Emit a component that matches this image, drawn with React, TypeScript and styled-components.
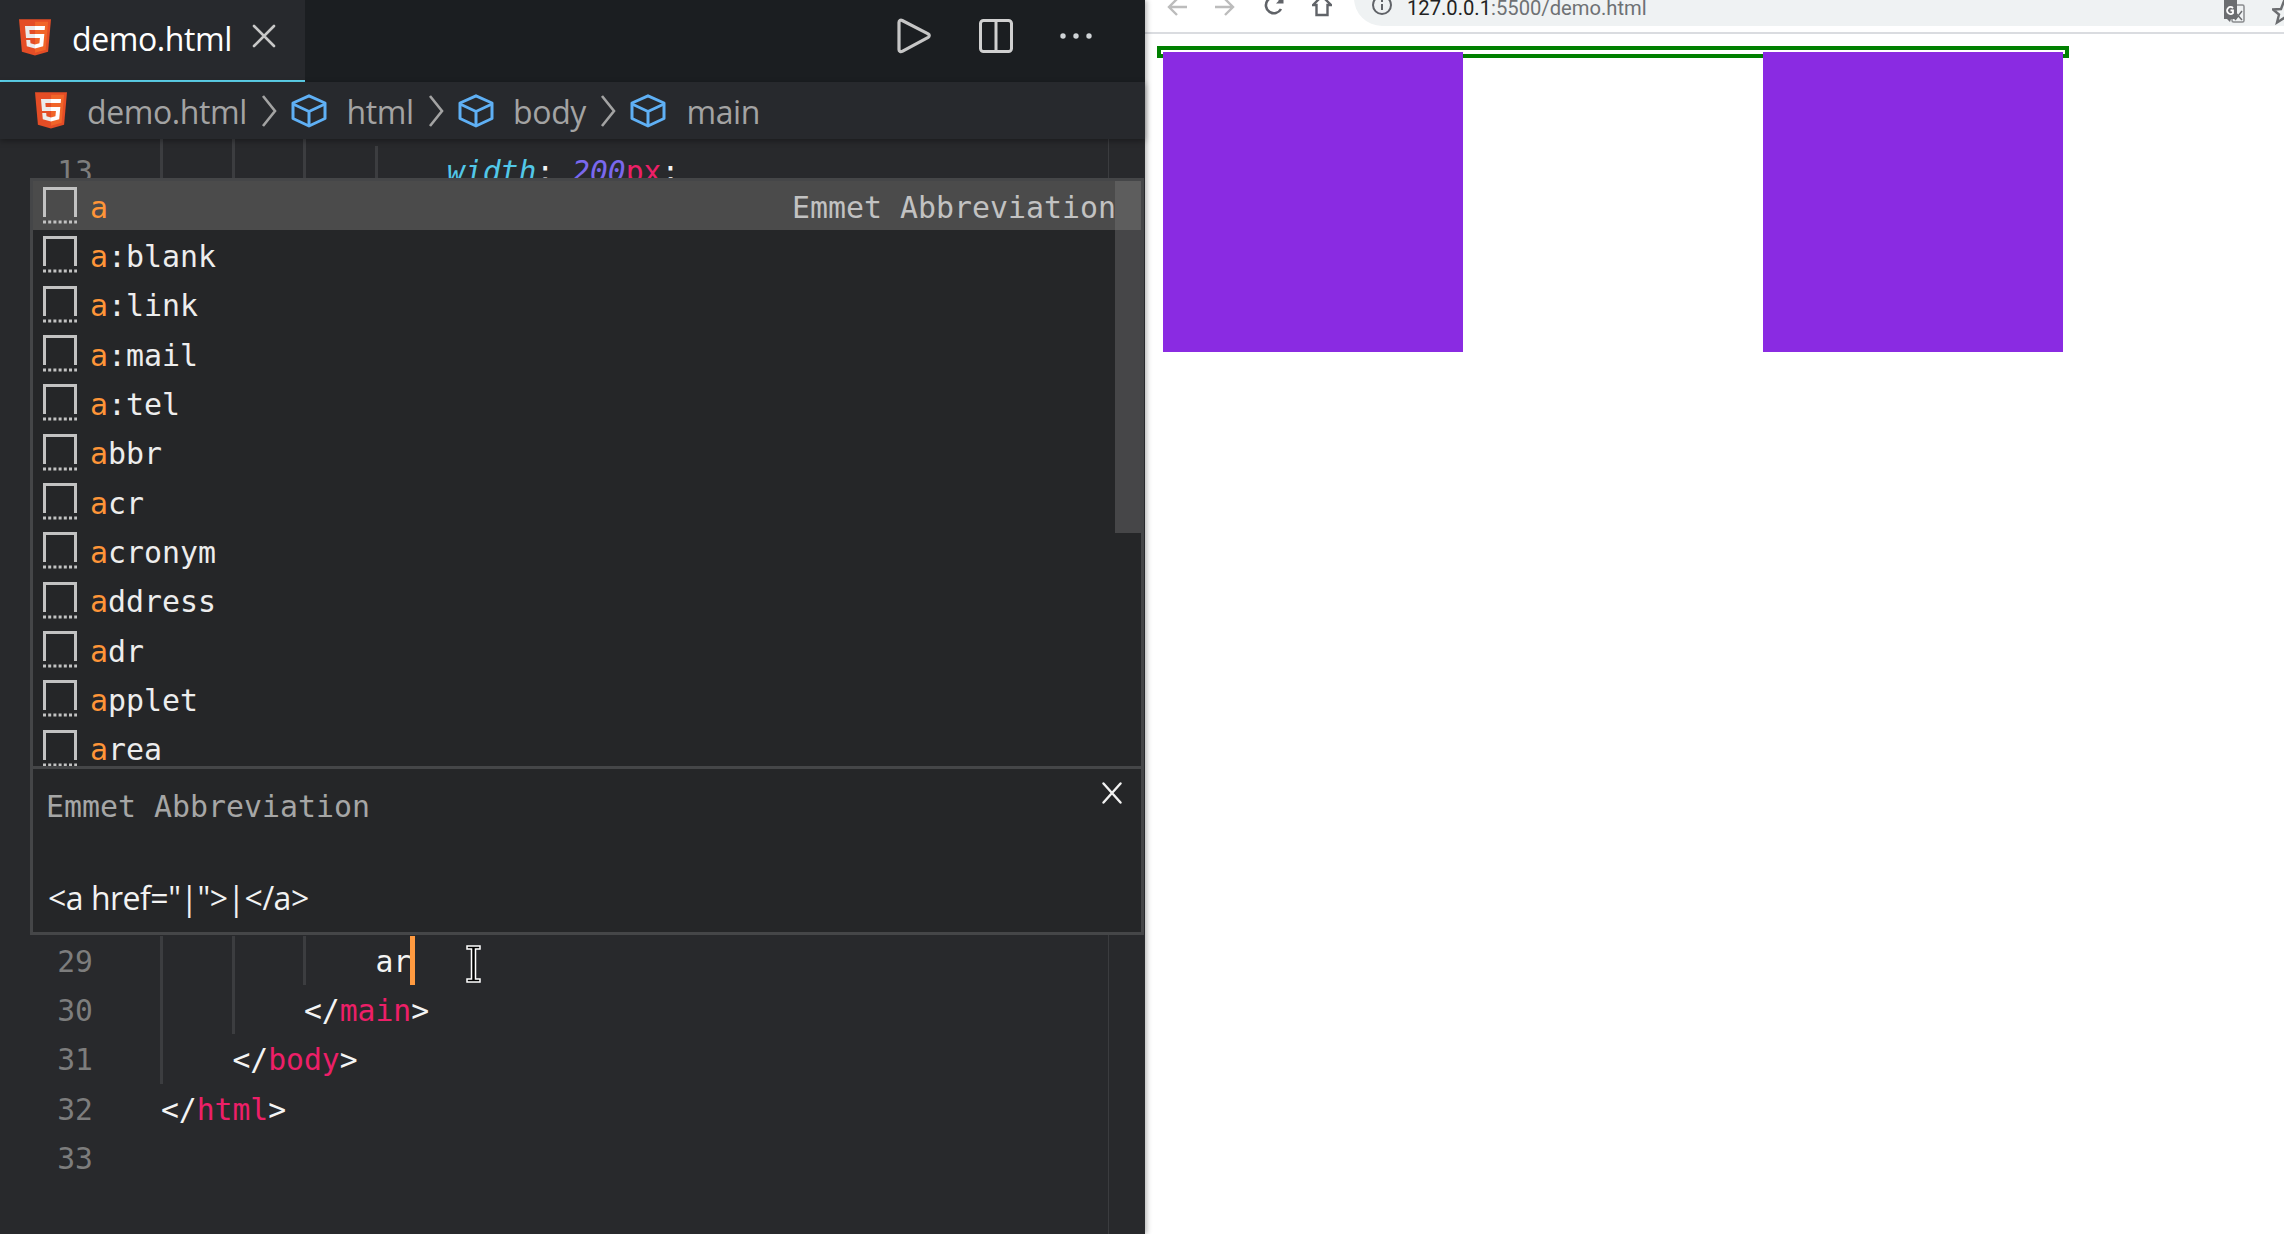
import React from 'react';
import styled, { createGlobalStyle } from 'styled-components';

const GlobalStyle = createGlobalStyle`
  html, body {
    margin: 0;
    padding: 0;
    background: #fff;
  }
  body {
    font-family: "Open Sans", "Liberation Sans", sans-serif;
  }
`;

const MONO = '"DejaVu Sans Mono", "Liberation Mono", monospace';
const LINE = 49.33;

const Shell = styled.div`
  display: flex;
  width: 2284px;
  height: 1234px;
  overflow: hidden;
`;

// Editor side
const Editor = styled.div`
  position: relative;
  z-index: 2;
  flex: 0 0 1145px;
  display: flex;
  flex-direction: column;
  background: #28292c;
  box-shadow: 2px 0 5px rgba(0, 0, 0, 0.28);
`;

const TabBar = styled.div`
  flex: 0 0 82px;
  display: flex;
  justify-content: space-between;
  background: #1b1e21;
`;

const Tab = styled.div`
  box-sizing: border-box;
  width: 305px;
  display: flex;
  align-items: center;
  padding: 0 0 5px 19px;
  background: #27292d;
  border-bottom: 2px solid #5dd4ee;
`;

const TabName = styled.span`
  margin-left: 21px;
  padding-top: 2px;
  font-size: 32px;
  letter-spacing: -0.4px;
  color: #fff;
`;

const TabClose = styled.svg`
  margin-left: 20px;
  margin-bottom: 3px;
`;

const Actions = styled.div`
  display: flex;
  align-items: center;
  gap: 47px;
  padding: 0 53px 10px 0;
`;

const Breadcrumbs = styled.div`
  position: relative;
  z-index: 2;
  flex: 0 0 57px;
  display: flex;
  align-items: center;
  padding-left: 35px;
  background: #27292d;
  box-shadow: 0 2px 6px rgba(0, 0, 0, 0.35);
`;

const Crumb = styled.span`
  margin-left: ${({ $gap }: { $gap: number }) => $gap}px;
  padding-top: 3px;
  font-size: 32px;
  letter-spacing: -0.4px;
  color: #a3a3a3;
  line-height: 54px;
`;

const CrumbChevron = styled.svg`
  margin: 0 14.5px 0 14px;
`;

const EditorBody = styled.div`
  position: relative;
  flex: 1;
  overflow: hidden;
`;

const CodeLines = styled.div`
  margin-top: -42px;
`;

const Row = styled.div`
  display: flex;
  height: ${LINE}px;
  font-family: ${MONO};
  font-size: 29.7px;
  line-height: ${LINE + 3}px;
  white-space: pre;
  color: #f4f4f4;
`;

const LineNumber = styled.div`
  box-sizing: border-box;
  flex: 0 0 160px;
  padding-right: 67px;
  text-align: right;
  color: #7d7d7d;
`;

const Code = styled.div<{ $level: number; $guides: number }>`
  position: relative;
  flex: 1;
  padding-left: calc(${({ $level }) => $level * 4}ch + 1px);
  background-image: repeating-linear-gradient(90deg, #3c3d40 0 3px, transparent 3px 71.6px);
  background-repeat: no-repeat;
  background-size: ${({ $guides }) => $guides * 71.6}px 100%;
`;

const Attr = styled.span`
  font-style: italic;
  color: #52c7e8;
`;

const Num = styled.span`
  font-style: italic;
  color: #7a68ee;
`;

const Tag = styled.span`
  color: #ed1f68;
`;

const Caret = styled.span`
  display: inline-block;
  width: 5px;
  height: ${LINE}px;
  vertical-align: top;
  margin-left: -1px;
  background: #ff9a40;
`;

const IBeam = styled.svg`
  position: absolute;
  left: 306px;
  top: 9px;
`;

const Ruler = styled.div`
  position: absolute;
  top: 0;
  bottom: 0;
  left: 1108px;
  width: 1px;
  background: #3b3c3f;
`;

// Suggest widget
const Suggest = styled.div`
  position: absolute;
  z-index: 3;
  top: 39px;
  left: 30px;
  box-sizing: border-box;
  width: 1114px;
  height: 757px;
  display: flex;
  flex-direction: column;
  border: 3px solid #454648;
  background: #252628;
`;

const SuggestList = styled.div`
  position: relative;
  flex: 0 0 585px;
  overflow: hidden;
  font-family: ${MONO};
  font-size: 29.9px;
`;

const SuggestRow = styled.div<{ $selected?: boolean }>`
  display: flex;
  align-items: center;
  justify-content: space-between;
  box-sizing: border-box;
  height: ${LINE}px;
  padding: 0 25px 0 10px;
  background: ${({ $selected }) => ($selected ? '#4b4b4b' : 'transparent')};
  color: #ededed;
`;

const RowLabel = styled.span`
  display: flex;
  align-items: center;
  gap: 13px;
  white-space: pre;
`;

const LabelText = styled.span`
  padding-top: 3px;
`;

const Match = styled.span`
  color: #ff9538;
`;

const RowDetail = styled.span`
  padding-top: 3px;
  color: #c2c2c2;
`;

const ScrollThumb = styled.div`
  position: absolute;
  top: 0;
  right: 0;
  width: 26px;
  height: 352px;
  background: rgba(121, 121, 121, 0.4);
`;

const Doc = styled.div`
  position: relative;
  flex: 1;
  border-top: 3px solid #454648;
`;

const DocTitle = styled.div`
  padding: 18px 0 0 13px;
  font-family: ${MONO};
  font-size: 29.9px;
  line-height: 40px;
  color: #a6a6a6;
`;

const DocSample = styled.div`
  margin-top: 49px;
  padding-left: 15px;
  font-size: 32px;
  line-height: 44px;
  letter-spacing: -0.5px;
  color: #f2f2f2;
`;

const DocClose = styled.svg`
  position: absolute;
  top: 13px;
  right: 19px;
`;

// Browser side
const Browser = styled.div`
  flex: 1;
  min-width: 0;
  display: flex;
  flex-direction: column;
  background: #fff;
`;

const Toolbar = styled.div`
  box-sizing: border-box;
  flex: 0 0 34px;
  display: flex;
  align-items: flex-end;
  overflow: hidden;
  padding-left: 22px;
  border-bottom: 2px solid #dadce0;
`;

const NavButton = styled.svg<{ $gap: number }>`
  flex: none;
  margin-right: ${({ $gap }) => $gap}px;
  margin-bottom: 15px;
`;

const AddressBar = styled.div`
  flex: 1;
  display: flex;
  align-items: flex-end;
  height: 40px;
  margin-bottom: 6px;
  padding-left: 18px;
  border-radius: 0 0 0 28px;
  background: #eff2f3;
  overflow: hidden;
`;

const Url = styled.span`
  flex: 1;
  margin-left: 15px;
  padding-bottom: 4px;
  font-family: Roboto, "Liberation Sans", sans-serif;
  font-size: 20.2px;
  line-height: 28px;
  color: #6e7174;
`;

const UrlHost = styled.span`
  color: #222;
`;

const Page = styled.div`
  padding: 12px 0 0 12px;
`;

const Outline = styled.div`
  box-sizing: border-box;
  display: flex;
  justify-content: space-between;
  width: 912px;
  height: 12px;
  padding: 2px;
  border: 4px solid #008000;
`;

const Square = styled.div`
  flex: none;
  width: 300px;
  height: 300px;
  background: #8a2be2;
`;

const Html5Icon = ({ size }: { size: number }) => (
  <svg width={size} height={size * 1.15} viewBox="30 0 451 512" style={{ flex: 'none' }}>
    <path fill="#E44D26" d="M71 460L30 0h451l-41 460-185 52" />
    <path fill="#F16529" d="M256 472l149-41 35-394H256" />
    <path fill="#EBEBEB" d="M256 208h-75l-5-58h80V94H114l15 171h127zm0 147h-1l-63-17-4-45h-56l8 89 115 32h1z" />
    <path fill="#FFF" d="M255 208v57h70l-7 73-63 17v59l116-32 16-174zm0-114v56h137l5-56z" />
  </svg>
);

const CubeIcon = () => (
  <svg width="36" height="34" viewBox="0 0 36 34" fill="none" stroke="#5fb0f5" strokeWidth="3" strokeLinejoin="round" style={{ flex: 'none' }}>
    <path d="M18 1.8L34 9v15.5L18 32 2 24.5V9z" />
    <path d="M2 10l16 7.5L34 10M18 17.5V32" />
  </svg>
);

const Chevron = () => (
  <CrumbChevron width="16" height="34" viewBox="0 0 16 34" fill="none" stroke="#a3a3a3" strokeWidth="2.6">
    <path d="M2 2l12 15L2 32" />
  </CrumbChevron>
);

const SnippetIcon = () => (
  <svg width="34" height="37" viewBox="0 0 34 37" fill="none" stroke="#c2c2c2" style={{ flex: 'none' }}>
    <path d="M1.5 30V1.5h31V30" strokeWidth="3" />
    <path d="M0 35h34" strokeWidth="3" strokeDasharray="3 2.2" />
  </svg>
);

const suggestions = ['a', 'a:blank', 'a:link', 'a:mail', 'a:tel', 'abbr', 'acr', 'acronym', 'address', 'adr', 'applet', 'area'];

const App = () => {
  return (
    <Shell>
      <GlobalStyle />
      <Editor>
        <TabBar>
          <Tab>
            <Html5Icon size={32} />
            <TabName>demo.html</TabName>
            <TabClose width="24" height="24" viewBox="0 0 24 24" stroke="#c8c8c8" strokeWidth="2.6" strokeLinecap="round">
              <path d="M2 2l20 20M22 2L2 22" />
            </TabClose>
          </Tab>
          <Actions>
            <svg width="36" height="36" viewBox="0 0 36 36" fill="none" stroke="#c6c6c6" strokeWidth="3.2" strokeLinejoin="round">
              <path d="M3 4.5c0-2 1.6-2.8 3.2-2l26 13.4c1.4.8 1.4 2.6 0 3.4L6.2 33.4C4.6 34.2 3 33.3 3 31.5z" />
            </svg>
            <svg width="34" height="34" viewBox="0 0 34 34" fill="none" stroke="#d0d0d0" strokeWidth="3">
              <rect x="1.5" y="1.5" width="31" height="31" rx="3" />
              <path d="M17 2v30" />
            </svg>
            <svg width="32" height="6" viewBox="0 0 32 6" fill="#cfd3d6">
              <circle cx="3" cy="3" r="2.7" />
              <circle cx="16" cy="3" r="2.7" />
              <circle cx="29" cy="3" r="2.7" />
            </svg>
          </Actions>
        </TabBar>
        <Breadcrumbs>
          <Html5Icon size={32} />
          <Crumb $gap={20}>demo.html</Crumb>
          <Chevron />
          <CubeIcon />
          <Crumb $gap={19}>html</Crumb>
          <Chevron />
          <CubeIcon />
          <Crumb $gap={19}>body</Crumb>
          <Chevron />
          <CubeIcon />
          <Crumb $gap={20}>main</Crumb>
        </Breadcrumbs>
        <EditorBody>
          <Ruler />
          <CodeLines>
            <Row>
              <LineNumber />
              <Code $level={4} $guides={3}>{'{'}</Code>
            </Row>
            <Row>
              <LineNumber>13</LineNumber>
              <Code $level={4} $guides={4}>
                <Attr>width</Attr>: <Num>200</Num>
                <Tag>px</Tag>;
              </Code>
            </Row>
            {Array.from({ length: 15 }, (_, i) => (
              <Row key={i} />
            ))}
            <Row>
              <LineNumber>29</LineNumber>
              <Code $level={3} $guides={3}>
                ar
                <Caret />
                <IBeam width="15" height="38" viewBox="0 0 15 38" fill="#000" stroke="#fff" strokeWidth="1.5">
                  <path d="M1 1h13v3H9.500v30H14v3H1v-3h4.500V4H1z" />
                </IBeam>
              </Code>
            </Row>
            <Row>
              <LineNumber>30</LineNumber>
              <Code $level={2} $guides={2}>
                {'</'}
                <Tag>main</Tag>
                {'>'}
              </Code>
            </Row>
            <Row>
              <LineNumber>31</LineNumber>
              <Code $level={1} $guides={1}>
                {'</'}
                <Tag>body</Tag>
                {'>'}
              </Code>
            </Row>
            <Row>
              <LineNumber>32</LineNumber>
              <Code $level={0} $guides={0}>
                {'</'}
                <Tag>html</Tag>
                {'>'}
              </Code>
            </Row>
            <Row>
              <LineNumber>33</LineNumber>
              <Code $level={0} $guides={0} />
            </Row>
          </CodeLines>
          <Suggest>
            <SuggestList>
              {suggestions.map((item, i) => (
                <SuggestRow key={item} $selected={i === 0}>
                  <RowLabel>
                    <SnippetIcon />
                    <LabelText>
                      <Match>a</Match>
                      {item.slice(1)}
                    </LabelText>
                  </RowLabel>
                  {i === 0 && <RowDetail>Emmet Abbreviation</RowDetail>}
                </SuggestRow>
              ))}
              <ScrollThumb />
            </SuggestList>
            <Doc>
              <DocTitle>Emmet Abbreviation</DocTitle>
              <DocSample>{'<a href="|">|</a>'}</DocSample>
              <DocClose width="20" height="22" viewBox="0 0 20 22" stroke="#f2f2f2" strokeWidth="2.4" strokeLinecap="round">
                <path d="M1.5 1.5l17 19M18.500 1.5l-17 19" />
              </DocClose>
            </Doc>
          </Suggest>
        </EditorBody>
      </Editor>
      <Browser>
        <Toolbar>
          <NavButton $gap={28} width="20" height="20" viewBox="0 0 20 20" fill="none" stroke="#bcbcbc" strokeWidth="2.4">
            <path d="M20 10H2M10 2l-8 8 8 8" />
          </NavButton>
          <NavButton $gap={29} width="20" height="20" viewBox="0 0 20 20" fill="none" stroke="#bcbcbc" strokeWidth="2.4">
            <path d="M0 10h18M10 2l8 8-8 8" />
          </NavButton>
          <NavButton $gap={28} width="20" height="24" viewBox="0 0 20 24" fill="none" stroke="#606368" strokeWidth="2.6">
            <path d="M17 16a8 8 0 1 1-1.5-9.500L18 9" />
            <path d="M19.500 3v7.500H12" fill="#606368" stroke="none" />
          </NavButton>
          <NavButton $gap={22} width="20" height="24" viewBox="0 0 20 24" fill="none" stroke="#606368" strokeWidth="2.4">
            <path d="M1 12L10 3l9 9h-3.500v10h-11V12z" />
          </NavButton>
          <AddressBar>
            <svg width="20" height="30" viewBox="0 0 20 30" fill="none" stroke="#606368" strokeWidth="2" style={{ flex: 'none', marginBottom: 1 }}>
              <circle cx="10" cy="10" r="9" />
              <path d="M10 9v6M10 5v2" />
            </svg>
            <Url>
              <UrlHost>127.0.0.1</UrlHost>:5500/demo.html
            </Url>
            <svg width="22" height="26" viewBox="0 0 22 26" style={{ flex: 'none', marginBottom: 1 }}>
              <rect x="9" y="6" width="12" height="17" rx="1.5" fill="#eff2f3" stroke="#8a8c8f" strokeWidth="1.5" />
              <path d="M1 0h13v20H8l-1 3-3-3H1z" fill="#6b6d70" />
              <path d="M11 12l8 9M19 12l-7 9" stroke="#6b6d70" strokeWidth="1.5" />
              <path d="M10 9a3.500 3.500 0 1 0 0 5v-2.500H7.500" fill="none" stroke="#fff" strokeWidth="1.8" />
            </svg>
            <svg width="24" height="26" viewBox="0 0 24 26" fill="none" stroke="#6b6d70" strokeWidth="2.4" style={{ flex: 'none', margin: '0 -12px 1px 27px' }}>
              <path d="M12 2l3 8 8 .5-6 5 2 8-7-4.500L5 23.500l2-8-6-5 8-.5z" />
            </svg>
          </AddressBar>
        </Toolbar>
        <Page>
          <Outline>
            <Square />
            <Square />
          </Outline>
        </Page>
      </Browser>
    </Shell>
  );
};

export default App;
